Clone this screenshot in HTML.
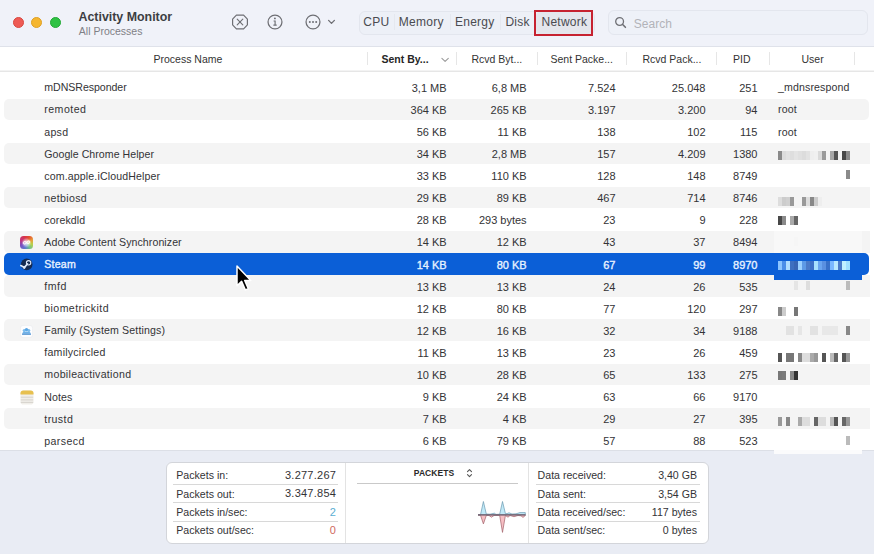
<!DOCTYPE html><html><head><meta charset="utf-8"><style>
*{margin:0;padding:0;box-sizing:border-box}
html,body{width:874px;height:554px;overflow:hidden;background:#fff;font-family:"Liberation Sans",sans-serif;color:#2a2a2a}
.a{position:absolute;white-space:nowrap}
#tb{position:absolute;left:0;top:0;width:874px;height:46.5px;background:#f0f2f9;border-bottom:1px solid #dfe2ea}
.dot{position:absolute;width:11.6px;height:11.6px;border-radius:50%;top:16.6px}
#hdr{position:absolute;left:0;top:46.5px;width:874px;height:25px;background:#fff;border-bottom:1px solid #e6e6e6}
.hd{position:absolute;top:51.5px;width:1px;height:13.5px;background:#e6e6e6}
.ht{position:absolute;top:52.6px;font-size:10.5px;color:#333;white-space:nowrap;line-height:13px}
.stripe{position:absolute;left:4px;width:865px;background:#f4f4f4;border-radius:5px}
.sel{position:absolute;left:4px;width:865px;background:#0b5fd7;border-radius:5px}
.c{position:absolute;font-size:10.6px;line-height:13px;white-space:nowrap;color:#333336}
.r{text-align:right}
.w{color:#e8f2ff;-webkit-text-stroke:0.35px #e8f2ff}
.n{font-size:11px}
#bp{position:absolute;left:0;top:450px;width:874px;height:104px;background:#e9ecf4;border-top:1px solid #dcdfe6}
#box{position:absolute;left:166px;top:462px;width:543px;height:82px;background:#fff;border:1px solid #d3d5da;border-radius:6px}
.bl{position:absolute;font-size:10.6px;line-height:13px;color:#333336;white-space:nowrap}
.sep{position:absolute;height:1px;background:#d8d8d8}
</style></head><body>
<div id="tb"></div>
<div class="dot" style="left:12.7px;background:#ee5b55;border:0.5px solid #d9473f"></div>
<div class="dot" style="left:30.8px;background:#f5b630;border:0.5px solid #dfa023"></div>
<div class="dot" style="left:49.5px;background:#2fc244;border:0.5px solid #22a935"></div>
<div class="a" style="left:78.5px;top:9px;font-size:12.4px;font-weight:bold;color:#3c3e43;line-height:16px">Activity Monitor</div>
<div class="a" style="left:78.8px;top:24.6px;font-size:10.5px;color:#7f8086;line-height:13px">All Processes</div>
<svg class="a" style="left:230px;top:12px" width="20" height="20" viewBox="0 0 20 20"><path d="M6.4 3.2 L13.6 3.2 L17.4 7.2 L17.4 12.8 L13.6 16.8 L6.4 16.8 L2.6 12.8 L2.6 7.2 Z" fill="none" stroke="#6e6f74" stroke-width="1.2" stroke-linejoin="round"/><path d="M7.2 7.2 L12.8 12.8 M12.8 7.2 L7.2 12.8" stroke="#6e6f74" stroke-width="1.15" stroke-linecap="round"/></svg>
<svg class="a" style="left:265.4px;top:12.2px" width="20" height="20" viewBox="0 0 20 20"><circle cx="10" cy="10" r="6.95" fill="none" stroke="#6e6f74" stroke-width="1.25"/><circle cx="9.9" cy="6.4" r="0.95" fill="#6e6f74"/><path d="M8.6 9 H10.1 V13.1 M8.4 13.1 H11.7" fill="none" stroke="#6e6f74" stroke-width="1.15"/></svg>
<svg class="a" style="left:303.4px;top:12.3px" width="20" height="20" viewBox="0 0 20 20"><circle cx="10" cy="10" r="6.95" fill="none" stroke="#6e6f74" stroke-width="1.25"/><circle cx="6.8" cy="10" r="1" fill="#6e6f74"/><circle cx="10" cy="10" r="1" fill="#6e6f74"/><circle cx="13.2" cy="10" r="1" fill="#6e6f74"/></svg>
<svg class="a" style="left:326px;top:17.3px" width="11" height="10" viewBox="0 0 11 10"><path d="M2.6 3.4 L5.5 6.4 L8.4 3.4" fill="none" stroke="#6e6f74" stroke-width="1.3" stroke-linecap="round" stroke-linejoin="round"/></svg>
<div class="a" style="left:358.5px;top:10.5px;width:236px;height:24px;border-radius:6px;background:#edf0f7;border:1px solid #e3e6ee"></div>
<div class="a" style="left:393.5px;top:14px;width:1px;height:16px;background:#e5e8ef"></div>
<div class="a" style="left:449.5px;top:14px;width:1px;height:16px;background:#e5e8ef"></div>
<div class="a" style="left:499.5px;top:14px;width:1px;height:16px;background:#e5e8ef"></div>
<div class="a" style="left:534px;top:14px;width:1px;height:16px;background:#e5e8ef"></div>
<div class="a" style="left:535.5px;top:11.5px;width:56px;height:22px;background:#e4e6ec;border-radius:4px"></div>
<div class="a" style="left:363.3px;top:14.7px;font-size:12px;letter-spacing:0.25px;line-height:15px;color:#4a4b50">CPU</div>
<div class="a" style="left:398.8px;top:14.7px;font-size:12px;letter-spacing:0.25px;line-height:15px;color:#4a4b50">Memory</div>
<div class="a" style="left:455px;top:14.7px;font-size:12px;letter-spacing:0.25px;line-height:15px;color:#4a4b50">Energy</div>
<div class="a" style="left:505.4px;top:14.7px;font-size:12px;letter-spacing:0.25px;line-height:15px;color:#4a4b50">Disk</div>
<div class="a" style="left:541.5px;top:14.7px;font-size:12px;letter-spacing:0.25px;line-height:15px;color:#4a4b50">Network</div>
<div class="a" style="left:534.2px;top:10px;width:58.8px;height:25.5px;border:2.5px solid #c62230"></div>
<div class="a" style="left:608.3px;top:10.2px;width:260px;height:24.6px;border-radius:6px;background:#eef1f8;border:1px solid #e3e6ee"></div>
<svg class="a" style="left:612.6px;top:15px" width="16" height="16" viewBox="0 0 16 16"><circle cx="6.6" cy="6.5" r="3.9" fill="none" stroke="#6e6f74" stroke-width="1.3"/><path d="M9.4 9.3 L12.4 12.3" stroke="#6e6f74" stroke-width="1.6" stroke-linecap="round"/></svg>
<div class="a" style="left:633.8px;top:16.5px;font-size:12px;line-height:15px;color:#b2b3b9">Search</div>
<div id="hdr"></div>
<div class="a" style="left:0;top:69.5px;width:874px;height:1.5px;background:#f3f3f3"></div>
<div class="hd" style="left:367px"></div>
<div class="hd" style="left:456.3px"></div>
<div class="hd" style="left:536.5px"></div>
<div class="hd" style="left:626.3px"></div>
<div class="hd" style="left:715.8px"></div>
<div class="hd" style="left:768.8px"></div>
<div class="hd" style="left:854px"></div>
<div class="ht" style="left:153.5px">Process Name</div>
<div class="ht" style="left:381.5px;font-weight:bold;color:#262626">Sent By...</div>
<svg class="a" style="left:440px;top:55.5px" width="10" height="8" viewBox="0 0 10 8"><path d="M1.9 2.4 L5.1 5.4 L8.3 2.4" fill="none" stroke="#9a9a9a" stroke-width="1.1" stroke-linecap="round" stroke-linejoin="round"/></svg>
<div class="ht" style="left:471.5px">Rcvd Byt...</div>
<div class="ht" style="left:550.5px">Sent Packe...</div>
<div class="ht" style="left:642.5px">Rcvd Pack...</div>
<div class="ht" style="left:733px">PID</div>
<div class="ht" style="left:801.5px">User</div>
<div class="c" style="left:44.3px;top:81.40px;letter-spacing:-0.05px">mDNSResponder</div>
<div class="c r n" style="right:427.4px;top:81.90px">3,1 MB</div>
<div class="c r n" style="right:347.4px;top:81.90px">6,8 MB</div>
<div class="c r n" style="right:258.5px;top:81.90px">7.524</div>
<div class="c r n" style="right:168.5px;top:81.90px">25.048</div>
<div class="c r n" style="right:116.5px;top:81.90px">251</div>
<div class="c" style="left:778px;top:81.40px;letter-spacing:0.12px">_mdnsrespond</div>
<div class="stripe" style="top:98.58px;height:21.6px"></div>
<div class="c" style="left:44.3px;top:103.48px;letter-spacing:0.45px">remoted</div>
<div class="c r n" style="right:427.4px;top:103.98px">364 KB</div>
<div class="c r n" style="right:347.4px;top:103.98px">265 KB</div>
<div class="c r n" style="right:258.5px;top:103.98px">3.197</div>
<div class="c r n" style="right:168.5px;top:103.98px">3.200</div>
<div class="c r n" style="right:116.5px;top:103.98px">94</div>
<div class="c" style="left:778px;top:103.48px;letter-spacing:0.12px">root</div>
<div class="c" style="left:44.3px;top:125.56px;letter-spacing:0.267px">apsd</div>
<div class="c r n" style="right:427.4px;top:126.06px">56 KB</div>
<div class="c r n" style="right:347.4px;top:126.06px">11 KB</div>
<div class="c r n" style="right:258.5px;top:126.06px">138</div>
<div class="c r n" style="right:168.5px;top:126.06px">102</div>
<div class="c r n" style="right:116.5px;top:126.06px">115</div>
<div class="c" style="left:778px;top:125.56px;letter-spacing:0.12px">root</div>
<div class="stripe" style="top:142.74px;height:21.6px"></div>
<div class="a" style="left:774px;top:142.74px;width:95.5px;height:21.6px;background:#f4f4f4"></div>
<div class="c" style="left:44.3px;top:147.64px;letter-spacing:0.037px">Google Chrome Helper</div>
<div class="c r n" style="right:427.4px;top:148.14px">34 KB</div>
<div class="c r n" style="right:347.4px;top:148.14px">2,8 MB</div>
<div class="c r n" style="right:258.5px;top:148.14px">157</div>
<div class="c r n" style="right:168.5px;top:148.14px">4.209</div>
<div class="c r n" style="right:116.5px;top:148.14px">1380</div>
<div class="a" style="left:778px;top:151px;width:4px;height:9px;background:#8a8a8a"></div>
<div class="a" style="left:782px;top:151px;width:4px;height:9px;background:#dcdcdc"></div>
<div class="a" style="left:786px;top:151px;width:4px;height:9px;background:#e2e2e2"></div>
<div class="a" style="left:790px;top:151px;width:4px;height:9px;background:#dedede"></div>
<div class="a" style="left:794px;top:151px;width:4px;height:9px;background:#e4e4e4"></div>
<div class="a" style="left:798px;top:151px;width:4px;height:9px;background:#e0e0e0"></div>
<div class="a" style="left:802px;top:151px;width:4px;height:9px;background:#dcdcdc"></div>
<div class="a" style="left:806px;top:151px;width:4px;height:9px;background:#e2e2e2"></div>
<div class="a" style="left:810px;top:151px;width:4px;height:9px;background:#eeeeee"></div>
<div class="a" style="left:814px;top:151px;width:4px;height:9px;background:#f0f0f0"></div>
<div class="a" style="left:818px;top:151px;width:4px;height:9px;background:#dadada"></div>
<div class="a" style="left:822px;top:151px;width:4px;height:9px;background:#9a9a9a"></div>
<div class="a" style="left:830px;top:151px;width:4px;height:9px;background:#a8a8a8"></div>
<div class="a" style="left:834px;top:151px;width:4px;height:9px;background:#555555"></div>
<div class="a" style="left:842px;top:151px;width:4px;height:9px;background:#474747"></div>
<div class="a" style="left:846px;top:151px;width:4px;height:9px;background:#8a8a8a"></div>
<div class="c" style="left:44.3px;top:169.72px;letter-spacing:0.129px">com.apple.iCloudHelper</div>
<div class="c r n" style="right:427.4px;top:170.22px">33 KB</div>
<div class="c r n" style="right:347.4px;top:170.22px">110 KB</div>
<div class="c r n" style="right:258.5px;top:170.22px">128</div>
<div class="c r n" style="right:168.5px;top:170.22px">148</div>
<div class="c r n" style="right:116.5px;top:170.22px">8749</div>
<div class="a" style="left:846px;top:170px;width:4px;height:9px;background:#8a8a8a"></div>
<div class="stripe" style="top:186.90px;height:21.6px"></div>
<div class="a" style="left:774px;top:186.90px;width:95.5px;height:21.6px;background:#f4f4f4"></div>
<div class="c" style="left:44.3px;top:191.80px;letter-spacing:0.329px">netbiosd</div>
<div class="c r n" style="right:427.4px;top:192.30px">29 KB</div>
<div class="c r n" style="right:347.4px;top:192.30px">89 KB</div>
<div class="c r n" style="right:258.5px;top:192.30px">467</div>
<div class="c r n" style="right:168.5px;top:192.30px">714</div>
<div class="c r n" style="right:116.5px;top:192.30px">8746</div>
<div class="a" style="left:778px;top:197px;width:4px;height:9px;background:#dddddd"></div>
<div class="a" style="left:782px;top:197px;width:4px;height:9px;background:#cccccc"></div>
<div class="a" style="left:786px;top:197px;width:4px;height:9px;background:#d0d0d0"></div>
<div class="a" style="left:790px;top:197px;width:4px;height:9px;background:#999999"></div>
<div class="a" style="left:802px;top:197px;width:4px;height:9px;background:#999999"></div>
<div class="a" style="left:806px;top:197px;width:4px;height:9px;background:#dddddd"></div>
<div class="a" style="left:810px;top:197px;width:4px;height:9px;background:#888888"></div>
<div class="a" style="left:814px;top:197px;width:4px;height:9px;background:#cccccc"></div>
<div class="a" style="left:818px;top:197px;width:4px;height:9px;background:#eeeeee"></div>
<div class="c" style="left:44.3px;top:213.88px;letter-spacing:0.129px">corekdld</div>
<div class="c r n" style="right:427.4px;top:214.38px">28 KB</div>
<div class="c r n" style="right:347.4px;top:214.38px">293 bytes</div>
<div class="c r n" style="right:258.5px;top:214.38px">23</div>
<div class="c r n" style="right:168.5px;top:214.38px">9</div>
<div class="c r n" style="right:116.5px;top:214.38px">228</div>
<div class="a" style="left:778px;top:215.5px;width:4px;height:9px;background:#484848"></div>
<div class="a" style="left:782px;top:215.5px;width:4px;height:9px;background:#8a8a8a"></div>
<div class="a" style="left:790px;top:215.5px;width:4px;height:9px;background:#aaaaaa"></div>
<div class="a" style="left:794px;top:215.5px;width:4px;height:9px;background:#666666"></div>
<div class="stripe" style="top:231.06px;height:21.6px"></div>
<div class="a" style="left:774px;top:231.06px;width:95.5px;height:21.6px;background:#f4f4f4"></div>
<div class="c" style="left:44.3px;top:235.96px;letter-spacing:0.076px">Adobe Content Synchronizer</div>
<div class="c r n" style="right:427.4px;top:236.46px">14 KB</div>
<div class="c r n" style="right:347.4px;top:236.46px">12 KB</div>
<div class="c r n" style="right:258.5px;top:236.46px">43</div>
<div class="c r n" style="right:168.5px;top:236.46px">37</div>
<div class="c r n" style="right:116.5px;top:236.46px">8494</div>
<div class="a" style="left:774px;top:230.96px;width:87.5px;height:22.08px;background:#f8f8f8"></div>
<div class="a" style="left:782px;top:237px;width:4px;height:9px;background:#f8f8f8"></div>
<div class="a" style="left:794px;top:237px;width:4px;height:9px;background:#f6f6f6"></div>
<div class="a" style="left:814px;top:237px;width:4px;height:9px;background:#f8f8f8"></div>
<div class="a" style="left:830px;top:237px;width:4px;height:9px;background:#f8f8f8"></div>
<div class="sel" style="top:253.04px;height:22.08px"></div>
<div class="c w" style="left:44.3px;top:258.04px;letter-spacing:0.2px">Steam</div>
<div class="c w r n" style="right:427.4px;top:258.54px">14 KB</div>
<div class="c w r n" style="right:347.4px;top:258.54px">80 KB</div>
<div class="c w r n" style="right:258.5px;top:258.54px">67</div>
<div class="c w r n" style="right:168.5px;top:258.54px">99</div>
<div class="c w r n" style="right:116.5px;top:258.54px">8970</div>
<div class="a" style="left:778px;top:261px;width:4px;height:9px;background:#8ac4ff"></div>
<div class="a" style="left:782px;top:261px;width:4px;height:9px;background:#4a8ee8"></div>
<div class="a" style="left:786px;top:261px;width:4px;height:9px;background:#b0deff"></div>
<div class="a" style="left:790px;top:261px;width:4px;height:9px;background:#3d6fc0"></div>
<div class="a" style="left:794px;top:261px;width:4px;height:9px;background:#3866b5"></div>
<div class="a" style="left:798px;top:261px;width:4px;height:9px;background:#9ad0ff"></div>
<div class="a" style="left:802px;top:261px;width:4px;height:9px;background:#5d9ae6"></div>
<div class="a" style="left:806px;top:261px;width:4px;height:9px;background:#4a7ac8"></div>
<div class="a" style="left:810px;top:261px;width:4px;height:9px;background:#3d70c8"></div>
<div class="a" style="left:814px;top:261px;width:4px;height:9px;background:#a8e0ff"></div>
<div class="a" style="left:818px;top:261px;width:4px;height:9px;background:#6aa5f0"></div>
<div class="a" style="left:822px;top:261px;width:4px;height:9px;background:#5a90e0"></div>
<div class="a" style="left:826px;top:261px;width:4px;height:9px;background:#3870c8"></div>
<div class="a" style="left:830px;top:261px;width:4px;height:9px;background:#7ab8ff"></div>
<div class="a" style="left:834px;top:261px;width:4px;height:9px;background:#b8e8ff"></div>
<div class="a" style="left:838px;top:261px;width:4px;height:9px;background:#4a7ac8"></div>
<div class="a" style="left:842px;top:261px;width:4px;height:9px;background:#c0f0ff"></div>
<div class="a" style="left:846px;top:261px;width:4px;height:9px;background:#a0e0ff"></div>
<div class="stripe" style="top:275.22px;height:21.6px"></div>
<div class="a" style="left:774px;top:275.22px;width:95.5px;height:21.6px;background:#f4f4f4"></div>
<div class="c" style="left:44.3px;top:280.12px;letter-spacing:0.467px">fmfd</div>
<div class="c r n" style="right:427.4px;top:280.62px">13 KB</div>
<div class="c r n" style="right:347.4px;top:280.62px">13 KB</div>
<div class="c r n" style="right:258.5px;top:280.62px">24</div>
<div class="c r n" style="right:168.5px;top:280.62px">26</div>
<div class="c r n" style="right:116.5px;top:280.62px">535</div>
<div class="a" style="left:794px;top:281px;width:4px;height:9px;background:#e5e5e5"></div>
<div class="a" style="left:806px;top:281px;width:4px;height:9px;background:#dddddd"></div>
<div class="a" style="left:846px;top:281px;width:4px;height:9px;background:#bbbbbb"></div>
<div class="c" style="left:44.3px;top:302.20px;letter-spacing:0.4px">biometrickitd</div>
<div class="c r n" style="right:427.4px;top:302.70px">12 KB</div>
<div class="c r n" style="right:347.4px;top:302.70px">80 KB</div>
<div class="c r n" style="right:258.5px;top:302.70px">77</div>
<div class="c r n" style="right:168.5px;top:302.70px">120</div>
<div class="c r n" style="right:116.5px;top:302.70px">297</div>
<div class="a" style="left:778px;top:307px;width:4px;height:9px;background:#888888"></div>
<div class="a" style="left:782px;top:307px;width:4px;height:9px;background:#cccccc"></div>
<div class="a" style="left:794px;top:307px;width:4px;height:9px;background:#777777"></div>
<div class="stripe" style="top:319.38px;height:21.6px"></div>
<div class="a" style="left:774px;top:319.38px;width:95.5px;height:21.6px;background:#f4f4f4"></div>
<div class="c" style="left:44.3px;top:324.28px;letter-spacing:0.126px">Family (System Settings)</div>
<div class="c r n" style="right:427.4px;top:324.78px">12 KB</div>
<div class="c r n" style="right:347.4px;top:324.78px">16 KB</div>
<div class="c r n" style="right:258.5px;top:324.78px">32</div>
<div class="c r n" style="right:168.5px;top:324.78px">34</div>
<div class="c r n" style="right:116.5px;top:324.78px">9188</div>
<div class="a" style="left:786px;top:326px;width:4px;height:9px;background:#e2e2e2"></div>
<div class="a" style="left:790px;top:326px;width:4px;height:9px;background:#e2e2e2"></div>
<div class="a" style="left:798px;top:326px;width:4px;height:9px;background:#e6e6e6"></div>
<div class="a" style="left:810px;top:326px;width:4px;height:9px;background:#e2e2e2"></div>
<div class="a" style="left:814px;top:326px;width:4px;height:9px;background:#e2e2e2"></div>
<div class="a" style="left:822px;top:326px;width:4px;height:9px;background:#e8e8e8"></div>
<div class="a" style="left:826px;top:326px;width:4px;height:9px;background:#e8e8e8"></div>
<div class="a" style="left:830px;top:326px;width:4px;height:9px;background:#e8e8e8"></div>
<div class="a" style="left:834px;top:326px;width:4px;height:9px;background:#e8e8e8"></div>
<div class="a" style="left:846px;top:326px;width:4px;height:9px;background:#888888"></div>
<div class="c" style="left:44.3px;top:346.36px;letter-spacing:0.225px">familycircled</div>
<div class="c r n" style="right:427.4px;top:346.86px">11 KB</div>
<div class="c r n" style="right:347.4px;top:346.86px">13 KB</div>
<div class="c r n" style="right:258.5px;top:346.86px">23</div>
<div class="c r n" style="right:168.5px;top:346.86px">26</div>
<div class="c r n" style="right:116.5px;top:346.86px">459</div>
<div class="a" style="left:778px;top:353px;width:4px;height:9px;background:#555555"></div>
<div class="a" style="left:786px;top:353px;width:4px;height:9px;background:#777777"></div>
<div class="a" style="left:790px;top:353px;width:4px;height:9px;background:#777777"></div>
<div class="a" style="left:798px;top:353px;width:4px;height:9px;background:#888888"></div>
<div class="a" style="left:802px;top:353px;width:4px;height:9px;background:#dddddd"></div>
<div class="a" style="left:806px;top:353px;width:4px;height:9px;background:#dddddd"></div>
<div class="a" style="left:810px;top:353px;width:4px;height:9px;background:#aaaaaa"></div>
<div class="a" style="left:814px;top:353px;width:4px;height:9px;background:#999999"></div>
<div class="a" style="left:822px;top:353px;width:4px;height:9px;background:#555555"></div>
<div class="a" style="left:830px;top:353px;width:4px;height:9px;background:#bbbbbb"></div>
<div class="a" style="left:834px;top:353px;width:4px;height:9px;background:#666666"></div>
<div class="a" style="left:842px;top:353px;width:4px;height:9px;background:#555555"></div>
<div class="a" style="left:846px;top:353px;width:4px;height:9px;background:#999999"></div>
<div class="stripe" style="top:363.54px;height:21.6px"></div>
<div class="a" style="left:774px;top:363.54px;width:95.5px;height:21.6px;background:#f4f4f4"></div>
<div class="c" style="left:44.3px;top:368.44px;letter-spacing:0.306px">mobileactivationd</div>
<div class="c r n" style="right:427.4px;top:368.94px">10 KB</div>
<div class="c r n" style="right:347.4px;top:368.94px">28 KB</div>
<div class="c r n" style="right:258.5px;top:368.94px">65</div>
<div class="c r n" style="right:168.5px;top:368.94px">133</div>
<div class="c r n" style="right:116.5px;top:368.94px">275</div>
<div class="a" style="left:778px;top:371px;width:4px;height:9px;background:#777777"></div>
<div class="a" style="left:782px;top:371px;width:4px;height:9px;background:#7a7a7a"></div>
<div class="a" style="left:790px;top:371px;width:4px;height:9px;background:#888888"></div>
<div class="a" style="left:794px;top:371px;width:4px;height:9px;background:#333333"></div>
<div class="c" style="left:44.3px;top:390.52px;letter-spacing:0.1px">Notes</div>
<div class="c r n" style="right:427.4px;top:391.02px">9 KB</div>
<div class="c r n" style="right:347.4px;top:391.02px">24 KB</div>
<div class="c r n" style="right:258.5px;top:391.02px">63</div>
<div class="c r n" style="right:168.5px;top:391.02px">66</div>
<div class="c r n" style="right:116.5px;top:391.02px">9170</div>
<div class="stripe" style="top:407.70px;height:21.6px"></div>
<div class="a" style="left:774px;top:407.70px;width:95.5px;height:21.6px;background:#f4f4f4"></div>
<div class="c" style="left:44.3px;top:412.60px;letter-spacing:0.4px">trustd</div>
<div class="c r n" style="right:427.4px;top:413.10px">7 KB</div>
<div class="c r n" style="right:347.4px;top:413.10px">4 KB</div>
<div class="c r n" style="right:258.5px;top:413.10px">29</div>
<div class="c r n" style="right:168.5px;top:413.10px">27</div>
<div class="c r n" style="right:116.5px;top:413.10px">395</div>
<div class="a" style="left:778px;top:417px;width:4px;height:9px;background:#999999"></div>
<div class="a" style="left:786px;top:417px;width:4px;height:9px;background:#888888"></div>
<div class="a" style="left:798px;top:417px;width:4px;height:9px;background:#aaaaaa"></div>
<div class="a" style="left:802px;top:417px;width:4px;height:9px;background:#dddddd"></div>
<div class="a" style="left:806px;top:417px;width:4px;height:9px;background:#dddddd"></div>
<div class="a" style="left:814px;top:417px;width:4px;height:9px;background:#666666"></div>
<div class="a" style="left:818px;top:417px;width:4px;height:9px;background:#dddddd"></div>
<div class="a" style="left:822px;top:417px;width:4px;height:9px;background:#dddddd"></div>
<div class="a" style="left:830px;top:417px;width:4px;height:9px;background:#bbbbbb"></div>
<div class="a" style="left:834px;top:417px;width:4px;height:9px;background:#555555"></div>
<div class="a" style="left:842px;top:417px;width:4px;height:9px;background:#666666"></div>
<div class="a" style="left:846px;top:417px;width:4px;height:9px;background:#999999"></div>
<div class="c" style="left:44.3px;top:434.68px;letter-spacing:0.383px">parsecd</div>
<div class="c r n" style="right:427.4px;top:435.18px">6 KB</div>
<div class="c r n" style="right:347.4px;top:435.18px">79 KB</div>
<div class="c r n" style="right:258.5px;top:435.18px">57</div>
<div class="c r n" style="right:168.5px;top:435.18px">88</div>
<div class="c r n" style="right:116.5px;top:435.18px">523</div>
<div class="a" style="left:846px;top:435.5px;width:4px;height:9px;background:#bbbbbb"></div>
<div class="a" style="left:774px;top:253px;width:87.5px;height:27px;background:#0b5fd7"></div>
<div class="a" style="left:778px;top:261px;width:4px;height:9px;background:#8ac4ff"></div>
<div class="a" style="left:782px;top:261px;width:4px;height:9px;background:#4a8ee8"></div>
<div class="a" style="left:786px;top:261px;width:4px;height:9px;background:#b0deff"></div>
<div class="a" style="left:790px;top:261px;width:4px;height:9px;background:#3d6fc0"></div>
<div class="a" style="left:794px;top:261px;width:4px;height:9px;background:#3866b5"></div>
<div class="a" style="left:798px;top:261px;width:4px;height:9px;background:#9ad0ff"></div>
<div class="a" style="left:802px;top:261px;width:4px;height:9px;background:#5d9ae6"></div>
<div class="a" style="left:806px;top:261px;width:4px;height:9px;background:#4a7ac8"></div>
<div class="a" style="left:810px;top:261px;width:4px;height:9px;background:#3d70c8"></div>
<div class="a" style="left:814px;top:261px;width:4px;height:9px;background:#a8e0ff"></div>
<div class="a" style="left:818px;top:261px;width:4px;height:9px;background:#6aa5f0"></div>
<div class="a" style="left:822px;top:261px;width:4px;height:9px;background:#5a90e0"></div>
<div class="a" style="left:826px;top:261px;width:4px;height:9px;background:#3870c8"></div>
<div class="a" style="left:830px;top:261px;width:4px;height:9px;background:#7ab8ff"></div>
<div class="a" style="left:834px;top:261px;width:4px;height:9px;background:#b8e8ff"></div>
<div class="a" style="left:838px;top:261px;width:4px;height:9px;background:#4a7ac8"></div>
<div class="a" style="left:842px;top:261px;width:4px;height:9px;background:#c0f0ff"></div>
<div class="a" style="left:846px;top:261px;width:4px;height:9px;background:#a0e0ff"></div>
<div class="a" style="left:20px;top:236.0px;width:13px;height:13px;border-radius:3.5px;background:conic-gradient(from 20deg at 55% 50%, #e2502e, #e8a13a, #b9d24a, #6ec08a, #5b7ad0, #7a4fc0, #c2357e, #d8344a, #e2502e)"></div>
<div class="a" style="left:20px;top:236.0px;width:13px;height:13px;border-radius:3.5px;background:radial-gradient(circle at 50% 52%, rgba(255,255,255,0.85) 0, rgba(255,255,255,0.55) 2.5px, rgba(255,255,255,0) 5px)"></div>
<svg class="a" style="left:20px;top:236.0px" width="13" height="13" viewBox="0 0 13 13"><path d="M3.2 7 Q4.6 4.2 6.5 6.5 Q8.4 8.8 9.8 6 Q8.4 3.6 6.5 6.5 Q4.6 9.4 3.2 7 Z" fill="none" stroke="#fff" stroke-width="1.1" opacity="0.85"/></svg>
<svg class="a" style="left:19.6px;top:258.0px" width="13.5" height="13" viewBox="0 0 13.5 13"><circle cx="6.7" cy="6.4" r="5.8" fill="#142a52"/><circle cx="8.6" cy="4.8" r="2.2" fill="none" stroke="#dce8fb" stroke-width="1.1"/><path d="M0.8 7.6 L4.4 9.4 L7.4 6" fill="none" stroke="#dce8fb" stroke-width="1.7" stroke-linecap="round"/><circle cx="4.2" cy="9.6" r="1.3" fill="#dce8fb"/></svg>
<svg class="a" style="left:20px;top:324.6px" width="13" height="13" viewBox="0 0 13 13"><rect x="0.3" y="0.3" width="12.4" height="12.4" rx="3" fill="#fdfdfe" stroke="#e6e7eb" stroke-width="0.6"/><circle cx="4.2" cy="5.4" r="1.5" fill="#7cbcec"/><circle cx="8.8" cy="5.4" r="1.5" fill="#7cbcec"/><circle cx="6.5" cy="4.6" r="1.7" fill="#5aa6e4"/><path d="M2.2 8.6 Q2.6 6.8 4.2 6.8 Q5.2 6.8 6.5 6.6 Q7.8 6.8 8.8 6.8 Q10.4 6.8 10.8 8.6 Z" fill="#6db2ea"/><rect x="2" y="8.4" width="9" height="1.3" rx="0.5" fill="#3d86cc"/></svg>
<svg class="a" style="left:20px;top:389.5px" width="14" height="15" viewBox="0 0 14 15"><rect x="0.5" y="0.5" width="13" height="14" rx="2.8" fill="#f1efea"/><path d="M0.5 3.3 Q0.5 0.5 3.3 0.5 H10.7 Q13.5 0.5 13.5 3.3 V4.6 H0.5 Z" fill="#e7c04f"/><path d="M0.8 7.2 H13.2 M0.8 9.9 H13.2 M0.8 12.4 H13.2" stroke="#d2cfc8" stroke-width="0.9"/></svg>
<svg class="a" style="left:234px;top:263px" width="20" height="30" viewBox="0 0 20 30"><path d="M3 3 L3 22.8 L7.6 18.4 L11.3 26.9 L14.3 25.7 L10.7 17.5 L16.8 17.5 Z" fill="#000" stroke="#fff" stroke-width="1.5" stroke-linejoin="round"/></svg>
<div id="bp"></div>
<div class="a" style="left:774px;top:450px;width:88px;height:3.5px;background:#fbfbfc"></div>
<div id="box"></div>
<div class="a" style="left:345px;top:463px;width:1px;height:80px;background:#e3e3e3"></div>
<div class="a" style="left:528px;top:463px;width:1px;height:80px;background:#e3e3e3"></div>
<div class="bl" style="left:176.3px;top:469.1px">Packets in:</div>
<div class="bl" style="right:537.9px;top:468.8px;color:#333336;font-size:11px;letter-spacing:0.24px">3.277.267</div>
<div class="bl" style="left:176.3px;top:487.5px">Packets out:</div>
<div class="bl" style="right:537.9px;top:487.2px;color:#333336;font-size:11px;letter-spacing:0.24px">3.347.854</div>
<div class="bl" style="left:176.3px;top:505.9px">Packets in/sec:</div>
<div class="bl" style="right:537.9px;top:505.6px;color:#5aaed2;font-size:11px;letter-spacing:0.24px">2</div>
<div class="bl" style="left:176.3px;top:524.2px">Packets out/sec:</div>
<div class="bl" style="right:537.9px;top:523.9px;color:#d06a60;font-size:11px;letter-spacing:0.24px">0</div>
<div class="bl" style="left:537.6px;top:469.1px">Data received:</div>
<div class="bl" style="right:177.0px;top:469.1px">3,40 GB</div>
<div class="bl" style="left:537.6px;top:487.5px">Data sent:</div>
<div class="bl" style="right:177.0px;top:487.5px">3,54 GB</div>
<div class="bl" style="left:537.6px;top:505.9px">Data received/sec:</div>
<div class="bl" style="right:177.0px;top:505.9px">117 bytes</div>
<div class="bl" style="left:537.6px;top:524.2px">Data sent/sec:</div>
<div class="bl" style="right:177.0px;top:524.2px">0 bytes</div>
<div class="sep" style="left:173px;top:484px;width:164.5px"></div>
<div class="sep" style="left:536px;top:484px;width:164px"></div>
<div class="sep" style="left:173px;top:502.3px;width:164.5px"></div>
<div class="sep" style="left:536px;top:502.3px;width:164px"></div>
<div class="sep" style="left:173px;top:521.2px;width:164.5px"></div>
<div class="sep" style="left:536px;top:521.2px;width:164px"></div>
<div class="a" style="left:413.8px;top:467px;font-size:8.5px;line-height:12px;font-weight:bold;letter-spacing:0.05px;color:#2a2a2a">PACKETS</div>
<svg class="a" style="left:465.1px;top:467.6px" width="9" height="11" viewBox="0 0 9 11"><path d="M2.5 3.7 L4.5 1.7 L6.5 3.7 M2.5 6.6 L4.5 8.6 L6.5 6.6" fill="none" stroke="#555" stroke-width="1.1" stroke-linecap="round" stroke-linejoin="round"/></svg>
<div class="sep" style="left:356.5px;top:482.5px;width:161px;background:#c9c9c9"></div>
<svg class="a" style="left:476px;top:498px" width="52" height="38" viewBox="0 0 52 38"><path d="M2 16.9 L4.6 16.4 L7.4 3.5 L10.3 16 L14 16.2 L18.4 15.2 L20 16.4 L23.7 16.2 L26.5 3.5 L29.4 15.5 L31 15.6 L33 14.8 L36 16 L40 15.8 L44 14.6 L49.3 14.6 L49.3 16.9 Z" fill="#c2eaf8" stroke="#6a9ab0" stroke-width="0.7" stroke-linejoin="round"/><path d="M2 16.9 L4.6 17.5 L7.4 25.9 L10.3 17.5 L13 17.5 L15.5 19.2 L18 17.5 L23.7 17.5 L26.5 34.4 L29.4 17.5 L32 19.2 L34 17.5 L38 18.7 L42 17.5 L45 17.8 L47 19.4 L49.3 17.5 L49.3 16.9 Z" fill="#f6bfc4" stroke="#a06068" stroke-width="0.7" stroke-linejoin="round"/><path d="M2 16.9 H49.5" stroke="#6d6676" stroke-width="1.1"/></svg>
</body></html>
